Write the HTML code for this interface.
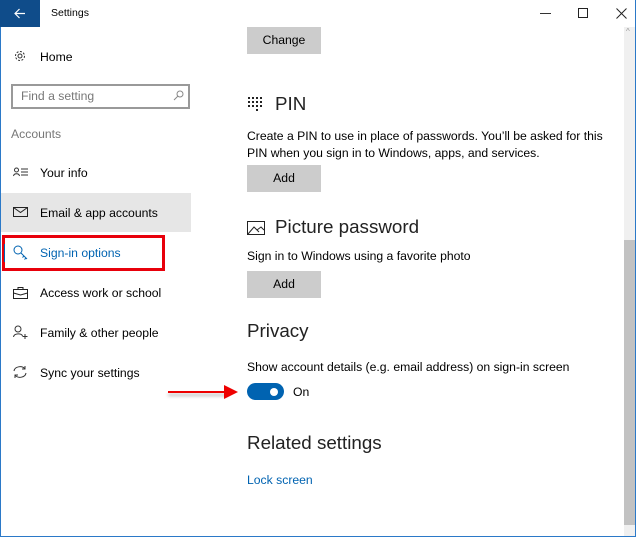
<!DOCTYPE html>
<html><head><style>
*{margin:0;padding:0;box-sizing:border-box}
body{width:636px;height:537px;overflow:hidden;background:#fff;font-family:"Liberation Sans",sans-serif;color:#000;position:relative}
.a{position:absolute;white-space:nowrap}
.t{font-size:12.2px}
.btn{position:absolute;left:247px;width:74px;height:27px;background:#ccc;font-size:12.2px;text-align:center;line-height:27px}
.h{font-size:18.8px;color:#222}
.nav{font-size:12.2px;left:40px}
svg{position:absolute}
</style></head><body>
<div class="a" style="left:0;top:0;width:1px;height:537px;background:#2b79c8"></div>
<div class="a" style="left:635px;top:0;width:1px;height:537px;background:#2b79c8"></div>
<div class="a" style="left:0;top:536px;width:636px;height:1px;background:#2b79c8"></div>
<div class="a" style="left:0;top:0;width:40px;height:27px;background:#0f4c8a"></div>
<svg style="left:14px;top:8px" width="12" height="11"><path d="M1 5.5H11M5.5 1L1 5.5L5.5 10" fill="none" stroke="#fff" stroke-width="1.2"/></svg>
<div class="a" style="left:51px;top:7px;font-size:10.5px">Settings</div>
<div class="a" style="left:540px;top:13px;width:11px;height:1px;background:#333"></div>
<div class="a" style="left:578px;top:8px;width:10px;height:10px;border:1px solid #222"></div>
<svg style="left:616px;top:8px" width="11" height="11"><path d="M0.5 0.5L10.5 10.5M10.5 0.5L0.5 10.5" stroke="#222"/></svg>
<svg style="left:13px;top:49px" width="14" height="14"><circle cx="7" cy="7" r="4.5" fill="none" stroke="#333" stroke-dasharray="2 1.5"/><circle cx="7" cy="7" r="2" fill="none" stroke="#333"/></svg>
<div class="a nav" style="top:50px">Home</div>
<div class="a" style="left:11px;top:84px;width:179px;height:25px;border:2px solid #999"></div>
<div class="a" style="left:21px;top:89px;font-size:12.2px;color:#777">Find a setting</div>
<svg style="left:173px;top:90px" width="11" height="11"><circle cx="7" cy="4" r="3" fill="none" stroke="#888"/><path d="M5 6L1 10" stroke="#888"/></svg>
<div class="a" style="left:11px;top:127px;font-size:12.2px;color:#777">Accounts</div>
<svg style="left:13px;top:167px" width="16" height="10"><circle cx="3.5" cy="3" r="2" fill="none" stroke="#333"/><path d="M0.5 9C1 6 6 6 6.5 9M8 2H15M8 5H15M8 8H15" fill="none" stroke="#333"/></svg>
<div class="a nav" style="top:166px">Your info</div>
<div class="a" style="left:1px;top:193px;width:190px;height:39px;background:#e6e6e6"></div>
<svg style="left:13px;top:207px" width="15" height="10"><rect x="0.5" y="0.5" width="14" height="9" fill="none" stroke="#222"/><path d="M0.5 0.5L7.5 5.5L14.5 0.5" fill="none" stroke="#222"/></svg>
<div class="a nav" style="top:206px">Email &amp; app accounts</div>
<div class="a" style="left:2px;top:235px;width:163px;height:36px;border:3px solid #e8000b"></div>
<div class="a" style="left:4px;top:244px;width:1px;height:18px;background:#0063b1"></div>
<svg style="left:13px;top:245px" width="15" height="15"><circle cx="5" cy="5" r="4" fill="none" stroke="#0063b1"/><path d="M8 8L14 14M11 11L9.5 12.5M13 13L11.5 14.5" stroke="#0063b1"/></svg>
<div class="a nav" style="top:246px;color:#0063b1">Sign-in options</div>
<svg style="left:13px;top:287px" width="15" height="12"><rect x="0.5" y="2.5" width="14" height="9" fill="none" stroke="#222"/><path d="M5 2.5V0.5H10V2.5M0.5 6L7.5 8L14.5 6" fill="none" stroke="#222"/></svg>
<div class="a nav" style="top:286px">Access work or school</div>
<svg style="left:13px;top:325px" width="15" height="14"><circle cx="5" cy="4" r="3" fill="none" stroke="#333"/><path d="M0.5 12C1 8 9 8 9.5 11M12 9V14M9.5 11.5H14.5" fill="none" stroke="#333"/></svg>
<div class="a nav" style="top:326px">Family &amp; other people</div>
<svg style="left:12px;top:365px" width="16" height="14"><path d="M2 6A6 5 0 0 1 13 4M14 8A6 5 0 0 1 3 10M13 1V4H10M3 13V10H6" fill="none" stroke="#333"/></svg>
<div class="a nav" style="top:366px">Sync your settings</div>

<div class="btn" style="top:27px">Change</div>
<svg style="left:248px;top:97px" width="14" height="16" fill="#222"><rect x="0" y="0" width="2" height="2"/><rect x="4" y="0" width="2" height="2"/><rect x="8" y="0" width="2" height="2"/><rect x="12" y="0" width="2" height="2"/><rect x="0" y="4" width="2" height="2"/><rect x="4" y="4" width="2" height="2"/><rect x="8" y="4" width="2" height="2"/><rect x="12" y="4" width="2" height="2"/><rect x="0" y="8" width="2" height="2"/><rect x="4" y="8" width="2" height="2"/><rect x="8" y="8" width="2" height="2"/><rect x="12" y="8" width="2" height="2"/><rect x="8" y="12" width="2" height="2"/></svg>
<div class="a h" style="left:275px;top:93px">PIN</div>
<div class="a t" style="left:247px;top:128px;line-height:17px">Create a PIN to use in place of passwords. You’ll be asked for this<br>PIN when you sign in to Windows, apps, and services.</div>
<div class="btn" style="top:165px">Add</div>
<svg style="left:247px;top:221px" width="18" height="14"><rect x="0.5" y="0.5" width="17" height="13" fill="none" stroke="#222"/><path d="M1 13 L7 6 L12 11 M10 9 L14 6 L17 9" fill="none" stroke="#222"/></svg>
<div class="a h" style="left:275px;top:216px">Picture password</div>
<div class="a t" style="left:247px;top:249px">Sign in to Windows using a favorite photo</div>
<div class="btn" style="top:271px">Add</div>
<div class="a h" style="left:247px;top:320px">Privacy</div>
<div class="a t" style="left:247px;top:360px">Show account details (e.g. email address) on sign-in screen</div>
<div class="a" style="left:247px;top:383px;width:37px;height:17px;border-radius:9px;background:#0063b1"></div>
<div class="a" style="left:270px;top:388px;width:8px;height:8px;border-radius:50%;background:#fff"></div>
<div class="a t" style="left:293px;top:385px">On</div>
<div class="a" style="left:168px;top:391px;width:60px;height:2px;background:#e00;box-shadow:0 3px 3px rgba(0,0,0,.3)"></div>
<svg style="left:224px;top:385px" width="14" height="14"><path d="M0 0 L14 7 L0 14Z" fill="#e00"/></svg>
<div class="a h" style="left:247px;top:432px">Related settings</div>
<div class="a t" style="left:247px;top:473px;color:#0063b1">Lock screen</div>

<div class="a" style="left:624px;top:27px;width:11px;height:509px;background:#f0f0f0"></div>
<div class="a" style="left:626px;top:27px;font-size:8px;color:#999">^</div>
<div class="a" style="left:624px;top:240px;width:11px;height:285px;background:#c2c2c2"></div>
</body></html>
